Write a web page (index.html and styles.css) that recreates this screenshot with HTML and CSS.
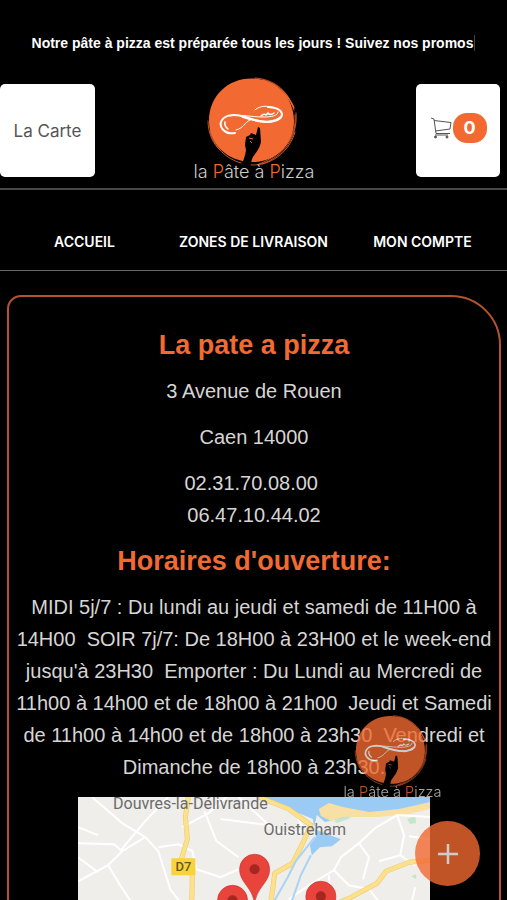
FILE: index.html
```html
<!DOCTYPE html>
<html lang="fr">
<head>
<meta charset="utf-8">
<meta name="viewport" content="width=device-width, initial-scale=1">
<title>La pate a pizza</title>
<link rel="stylesheet" href="styles.css">
</head>
<body>
<svg class="defs" aria-hidden="true">
  <symbol id="logo" viewBox="0 0 122 106">
    <path fill="#f26a31" d="M16 45C16 20 35 2.500 58 2.500C84 2 101 22 101 45C101 69 82 87 58 86C34 85 16 68 16 45Z"/>
    <g fill="none" stroke="#f26a31" stroke-linecap="round">
      <path stroke-width=".8" d="M62 2C80 3 94 14 99 29M70 4C86 8 97 19 101 34M17 55C21 71 33 83 48 87"/>
      <path stroke-width="1.300" d="M88 15Q97 22 101 32"/>
      <path stroke-width=".8" d="M103 37C105 61 91 80 69 88M102 39C104 61 90 79 66 88M15 45C15 57 20 68 27 74M102 56C96 77 77 90 58 89"/>
    </g>
    <g fill="none" stroke="#fff" stroke-linecap="round">
      <path stroke-width="2" d="M42 57C31 59 25 50 29 44C33 38 43 38 52 41C61 44 69 46 76 46C84 45 89 42 89 38C88 33 81 31 75 31"/>
      <path stroke-width="2" d="M50 41C62 45 74 48 83 44L88 41"/>
      <path stroke-width="1" d="M78 31C71 29 65 31 62 34M37 40C48 38 58 41 70 41C78 41 85 40 85 36M43 54C51 52 51 47 57 44"/>
      <path stroke-width="1.500" d="M32 46Q31 50 35 53M68 40Q71 37 73 39L75 37Q77 40 81 37"/>
    </g>
    <path fill="#000" d="M47 91C50 86 52 81 53 74L52 69L53 61L57 59L58 57L63 59L65 51L67 52L68 66C66 75 61 78 59 83L57 91Z"/>
    <path fill="none" stroke="#f26a31" stroke-width="1" d="M56 62L60 63M57 65L59 67"/>
    <text class="logo-text" x="61" y="102" text-anchor="middle">la <tspan class="logo-accent">P</tspan>âte à <tspan class="logo-accent">P</tspan>izza</text>
  </symbol>
</svg>

<p class="promo"><span class="promo-text">Notre pâte à pizza est préparée tous les jours ! Suivez nos promos</span></p>

<header class="header">
  <a class="tile tile-menu" href="#carte">La Carte</a>
  <a class="brand" href="#accueil" aria-label="La Pâte à Pizza"><svg class="logo"><use href="#logo"/></svg></a>
  <a class="tile tile-cart" href="#panier" aria-label="Panier">
    <svg class="cart" viewBox="0 0 22 22" fill="none" stroke="#555" stroke-width="1"><path d="M1 1L4 2L6 16.500H20M4 3.500L21 5.500L20 12L5.500 14"/><circle cx="5.500" cy="20" r="1" fill="#555"/><circle cx="17" cy="20" r="1" fill="#555"/><path d="M5 18H18"/></svg>
    <span class="count">0</span>
  </a>
</header>

<nav class="nav">
  <a href="#accueil">ACCUEIL</a>
  <a href="#zones">ZONES DE LIVRAISON</a>
  <a href="#compte">MON COMPTE</a>
</nav>

<main class="card">
  <h1>La pate a pizza</h1>
  <p>3 Avenue de Rouen</p>
  <p>Caen 14000</p>
  <p>02.31.70.08.00&nbsp;<br>06.47.10.44.02</p>
  <h2>Horaires d'ouverture:</h2>
  <p>MIDI 5j/7 : Du lundi au jeudi et samedi de 11H00 à 14H00 &nbsp;SOIR 7j/7: De 18H00 à 23H00 et le week-end jusqu'à 23H30 &nbsp;Emporter : Du Lundi au Mercredi de 11h00 à 14h00 et de 18h00 à 21h00 &nbsp;Jeudi et Samedi de 11h00 à 14h00 et de 18h00 à 23h30 &nbsp;Vendredi et Dimanche de 18h00 à 23h30.</p>
  <svg class="map" viewBox="0 0 351 240" role="img" aria-label="Carte">
    <rect width="351" height="240" fill="#f0eeeb"/>
    <path fill="#9acbf5" d="M180 0H351V9L310 15L270 20L246 25L238 18L235 32L262 42L253 49L241 50L233 58L231 48L237 40L234 22L215 14Z"/>
    <path fill="#f8dfa4" d="M240 12L250 6L264 10L290 15L320 12L351 5V12L330 17L300 20L265 20L252 24L242 19Z"/>
    <g fill="#c5e6cc"><path d="M255 24L268 19L272 21L258 26ZM328 22L336 19L337 26L331 27ZM332 79L337 77L337 82Z"/></g>
    <g fill="none" stroke="#fff" stroke-width="2">
      <path d="M14 0L44 26L67 40L80 54L92 92L112 118M67 40L44 54L30 68L0 84M44 54L36 47L0 46M67 24L90 0M67 24L42 54M20 38L0 30M30 68L42 88L58 112M80 50L100 47L114 54L118 72L142 80M0 60L20 75M104 30L130 16L148 0M126 14L138 44L160 60M142 80L160 72"/>
      <path d="M142 22L190 28L205 36L226 34M160 0L190 28M218 20L224 30M351 20L318 18L296 31L280 46L262 60L255 73L270 88L290 92M318 18L325 38L321 58L336 68M280 46L290 60L284 82M255 73L230 88L210 102M321 58L300 64M351 42L330 39M336 90L330 115M290 92L306 112M250 78L253 118"/>
    </g>
    <g fill="none" stroke-linejoin="round">
      <path stroke="#e9c96a" stroke-width="5" d="M110 0L107 20L109 42L103 62L114 78L113 120M180 0L210 12L232 28L224 46L214 66L196 76L194 92L190 120M351 63L330 65L307 74L298 86L270 101L250 110"/>
      <path stroke="#fce08b" stroke-width="4" d="M110 0L107 20L109 42L103 62L114 78L113 120M180 0L210 12L232 28L224 46L214 66L196 76L194 92L190 120M351 63L330 65L307 74L298 86L270 101L250 110"/>
      <path stroke="#a9d4f5" stroke-width="2" d="M236 40L217 64L209 80L196 103M232 58L222 78L213 104"/>
    </g>
    <rect x="93" y="61" width="24" height="17" fill="#f8d33e"/>
    <text class="map-road" x="105" y="74" text-anchor="middle">D7</text>
    <text class="map-town" x="112" y="12" text-anchor="middle">Douvres-la-Délivrande</text>
    <text class="map-town" x="226" y="38" text-anchor="middle">Ouistreham</text>
    <g fill="#e8443c" stroke="#c4332c" stroke-width=".6">
      <path d="M176 108C175 90 161 86 161 72A15 15 0 0 1 191 72C191 86 177 90 176 108Z"/>
      <path d="M154 140C153 122 139 117 139 103A15 15 0 0 1 169 103C169 117 155 122 154 140Z"/>
      <path d="M242 136C241 118 227 113 227 99A15 15 0 0 1 257 99C257 113 243 118 242 136Z"/>
    </g>
    <g fill="#a52720"><circle cx="176" cy="72" r="5"/><circle cx="154" cy="103" r="5"/><circle cx="242" cy="99" r="5"/></g>
  </svg>
</main>

<aside class="floating">
  <svg class="floating-logo" aria-hidden="true"><use href="#logo"/></svg>
  <button class="fab" type="button" aria-label="Ouvrir le menu"><svg viewBox="0 0 20 20" width="20" height="20" stroke="#fff" stroke-width="2.500"><path d="M10 0V20M0 10H20"/></svg></button>
</aside>
</body>
</html>
```
FILE: styles.css
```css
* { box-sizing: border-box; }

body {
  margin: 0;
  background: #000;
  color: #d6d6d6;
  font-family: "Liberation Sans", Arial, sans-serif;
}

a { color: inherit; text-decoration: none; }

.defs { position: absolute; width: 0; height: 0; }

.promo {
  margin: 0;
  padding: 35px 0 24px;
  text-align: center;
  color: #fff;
  font-size: 14px;
  font-weight: 700;
  line-height: 17px;
}

.promo-text { padding-right: 1px; border-right: 1px solid #444; }

.header {
  display: grid;
  grid-template-columns: 95px 1fr 84px;
  align-items: start;
  padding: 0 7px 6px 0;
  border-bottom: 2px solid #484848;
}

.tile {
  display: flex;
  align-items: center;
  justify-content: center;
  height: 93px;
  margin-top: 8px;
  border-radius: 5px;
  background: #fff;
  color: #555;
  font-family: Inter, sans-serif;
  font-size: 17px;
}

.tile-cart { gap: 1px; padding-bottom: 6px; }

.brand { display: flex; justify-content: center; padding-right: 4px; }

.logo { width: 122px; height: 106px; }

.logo-text {
  fill: #ccc;
  font-family: Inter, sans-serif;
  font-size: 18px;
  font-weight: 300;
}

.logo-accent { fill: #f26a31; }

.cart { width: 22px; height: 22px; }

.count {
  width: 34px;
  border-radius: 14px;
  background: #f26a31;
  color: #fff;
  font-size: 18px;
  font-weight: 700;
  line-height: 30px;
  text-align: center;
}

.nav {
  display: grid;
  grid-template-columns: repeat(3, 1fr);
  padding: 40px 0 16px;
  border-bottom: 1px solid #666;
  color: #fff;
  font-family: Inter, sans-serif;
  font-size: 14px;
  font-weight: 600;
  line-height: 24px;
  text-align: center;
}

.card {
  margin: 24px 6px 24px 7px;
  padding: 32px 7px;
  border: 2px solid #b5532d;
  border-radius: 14px 50px 14px 14px;
  text-align: center;
  font-size: 20px;
  line-height: 32px;
}

.card h1,
.card h2 {
  margin: 0 0 14px;
  color: #f26a31;
  font-size: 27px;
  line-height: 32px;
}

.card p { margin: 0 0 14px; }

.map { display: block; width: 74%; margin: 0 auto; }

.map-town {
  fill: #6b6b6b;
  font-family: Roboto, sans-serif;
  font-size: 16px;
}

.map-road {
  fill: #6a5718;
  font-family: Roboto, sans-serif;
  font-size: 13px;
  font-weight: 500;
}

.floating {
  position: fixed;
  right: 27px;
  bottom: 14px;
  display: flex;
  flex-direction: column;
  align-items: flex-end;
  gap: 21px;
  opacity: .8;
}

.floating-logo { width: 99px; height: 86px; margin-right: 38px; }

.fab {
  display: grid;
  place-items: center;
  width: 65px;
  height: 65px;
  padding: 0;
  border: 0;
  border-radius: 50%;
  background: #f26a31;
}
```
